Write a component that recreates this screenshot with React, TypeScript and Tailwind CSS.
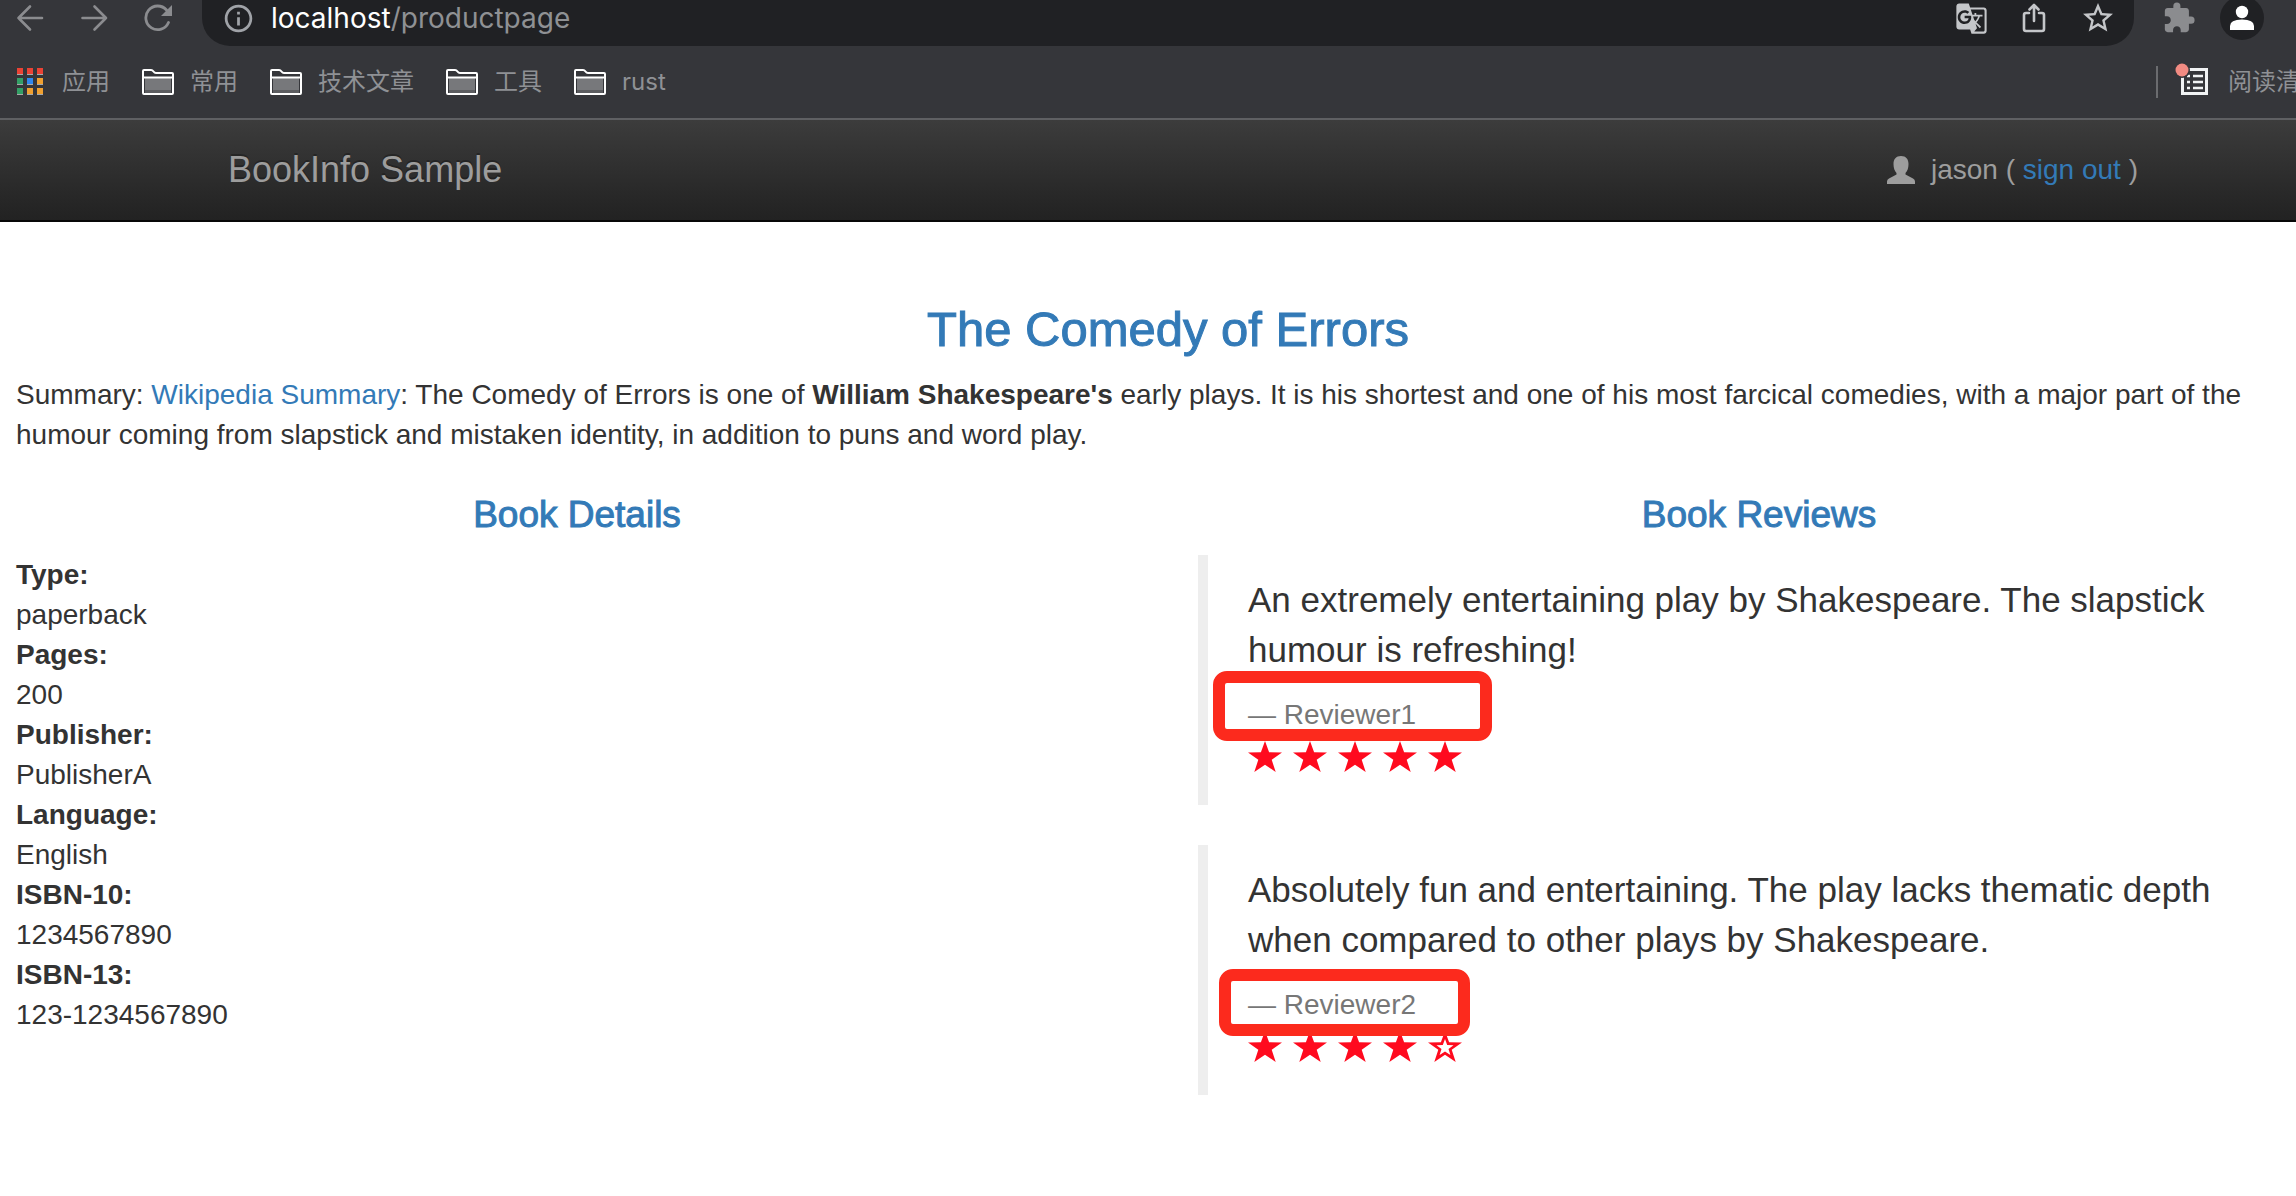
import React from "react";
import { MdExtension, MdGTranslate, MdInfoOutline, MdStarBorder } from "react-icons/md";

const appColors = ["#ea4335", "#ea4335", "#ea4335", "#34a066", "#2f87ee", "#f0a030", "#34a066", "#f0a030", "#f0a030"];

const folders = ["常用", "技术文章", "工具", "rust"];

const details = [
  ["Type:", "paperback"],
  ["Pages:", "200"],
  ["Publisher:", "PublisherA"],
  ["Language:", "English"],
  ["ISBN-10:", "1234567890"],
  ["ISBN-13:", "123-1234567890"],
];

const reviews = [
  {
    text: "An extremely entertaining play by Shakespeare. The slapstick humour is refreshing!",
    author: "Reviewer1",
    stars: 5,
    frame: "-top-6 -left-[35px] h-[70px] w-[279px]",
  },
  {
    text: "Absolutely fun and entertaining. The play lacks thematic depth when compared to other plays by Shakespeare.",
    author: "Reviewer2",
    stars: 4,
    frame: "-top-4 -left-[29px] h-[67px] w-[251px]",
  },
];

function IconButton({ label, children }: { label: string; children: React.ReactNode }) {
  return (
    <button type="button" aria-label={label} className="block shrink-0">
      {children}
    </button>
  );
}

function Toolbar() {
  return (
    <div className="flex h-[46px] items-start overflow-hidden pr-8 pl-4">
      <div className="flex h-9 items-center gap-9 text-[#8b8c8f]">
        <IconButton label="Back">
          <svg width="28" height="28" viewBox="0 0 28 28" fill="none" stroke="currentColor" strokeWidth="2.6" strokeLinecap="round" strokeLinejoin="round">
            <path d="M26 14H2.500M14 2.500L2.500 14 14 25.500" />
          </svg>
        </IconButton>
        <IconButton label="Forward">
          <svg width="28" height="28" viewBox="0 0 28 28" fill="none" stroke="currentColor" strokeWidth="2.6" strokeLinecap="round" strokeLinejoin="round">
            <path d="M2.500 14H26M14.500 2.500L26 14 14.500 25.500" />
          </svg>
        </IconButton>
        <IconButton label="Reload">
          <svg width="28" height="28" viewBox="0 0 28 28" fill="none" stroke="currentColor" strokeWidth="2.8" strokeLinecap="round">
            <path d="M24.500 18.500A11.800 11.800 0 1 1 22.500 6" />
            <path d="M28 1v11H17z" fill="currentColor" stroke="none" />
          </svg>
        </IconButton>
      </div>
      <div className="ml-[30px] flex h-[46px] flex-1 items-start rounded-b-[28px] bg-[#202124] pr-[18px] pl-5">
        <div className="flex h-9 flex-1 items-center gap-4">
          <MdInfoOutline size={33} color="#a0a3a8" />
          <a href="#" className="font-['Inter'] text-[28px] leading-9 text-[#8f9194]">
            <span className="text-white">localhost</span>/productpage
          </a>
        </div>
        <div className="flex h-9 items-center gap-8 text-[#c4c6c9]">
          <IconButton label="Translate">
            <MdGTranslate size={33} />
          </IconButton>
          <IconButton label="Share">
            <svg width="28" height="30" viewBox="0 0 28 30" fill="none" stroke="currentColor" strokeWidth="2.6" strokeLinecap="round" strokeLinejoin="round">
              <path d="M9 10H6q-2 0-2 2v14q0 2 2 2h16q2 0 2-2V12q0-2-2-2h-3M14 18V2M9.500 6.500L14 2l4.500 4.500" />
            </svg>
          </IconButton>
          <IconButton label="Bookmark this page">
            <MdStarBorder size={36} />
          </IconButton>
        </div>
      </div>
      <div className="ml-7 flex h-9 items-center gap-6">
        <span className="text-[#8b8c8f]">
          <IconButton label="Extensions">
            <MdExtension size={34} />
          </IconButton>
        </span>
        <IconButton label="Profile">
          <svg width="44" height="44" viewBox="0 0 44 44">
            <circle cx="22" cy="22" r="22" fill="#202124" />
            <circle cx="22" cy="16" r="6.200" fill="#fff" />
            <path d="M10 34v-4q0-6.500 12-6.500T34 30v4z" fill="#fff" />
          </svg>
        </IconButton>
      </div>
    </div>
  );
}

function Bookmarks() {
  return (
    <nav className="flex h-[72px] items-center gap-8 overflow-hidden pl-4 font-['Inter','Noto_Sans_CJK_SC',sans-serif] text-2xl whitespace-nowrap text-[#8f9195]">
      <a href="#" className="flex items-center gap-[18px]">
        <svg width="28" height="28" viewBox="0 0 28 28">
          {appColors.map((color, i) => (
            <g key={i}>
              <rect x={(i % 3) * 10 + 1} y={Math.floor(i / 3) * 10 + 1} width="6" height="6" fill="#a9a9a9" />
              <rect x={(i % 3) * 10 + 1} y={Math.floor(i / 3) * 10} width="6" height="6" fill={color} />
            </g>
          ))}
        </svg>
        应用
      </a>
      {folders.map((name) => (
        <a key={name} href="#" className="flex items-center gap-4">
          <svg width="32" height="26" viewBox="0 0 32 26">
            <path d="M3 9h26v13H3z" fill="#77787b" />
            <path d="M3 21h26v3H3z" fill="#5c5d60" />
            <path d="M1 24V2q0-1 1-1h7q1.500 0 2.500 1.500T14 4h16q1 0 1 1v19q0 1-1 1H2q-1 0-1-1zM1 8.500h30" fill="none" stroke="#fff" strokeWidth="2" />
          </svg>
          {name}
        </a>
      ))}
      <div className="ml-auto flex w-[140px] shrink-0 items-center">
        <span className="mr-[22px] h-8 w-[2px] shrink-0 bg-[#6b6c6f]" />
        <button type="button" className="flex items-center gap-[18px]">
          <svg width="30" height="30" viewBox="0 0 30 30" className="shrink-0 overflow-visible">
            <path d="M3 2.500h23.500v24H2.500V7" fill="none" stroke="#f1f3f4" strokeWidth="3" />
            <path d="M7 9h3M13 9h10M7 15h3M13 15h10M7 21h3M13 21h10" stroke="#f1f3f4" strokeWidth="2.600" />
            <circle cx="2" cy="3" r="8" fill="#35363a" />
            <circle cx="2" cy="3" r="6.500" fill="#f28b82" />
          </svg>
          阅读清
        </button>
      </div>
    </nav>
  );
}

function Star({ filled }: { filled: boolean }) {
  return (
    <svg width="34" height="31" viewBox="0 0 34 31">
      <path d="M17 0l4.100 11.200 12.900.2-10.300 7.400L27.700 31 17 23.700 6.300 31l4-12.200L0 11.400l12.900-.2z" fill="#ff0a1e" />
      {!filled && <path d="M17 8l2.200 6 6.300.2-5 3.800 1.900 6-5.400-3.600L11.600 24l1.900-6-5-3.800 6.300-.2z" fill="#fff" />}
    </svg>
  );
}

export default function App() {
  return (
    <div className="min-h-screen overflow-x-hidden bg-white font-['Liberation_Sans',sans-serif] text-[28px] leading-10 text-[#333]">
      <header className="border-b-2 border-[#5f6063] bg-[#35363a]">
        <Toolbar />
        <Bookmarks />
      </header>
      <div className="w-[calc(100%+40px)]">
        <nav className="border-b-2 border-[#080808] bg-linear-to-b from-[#3c3c3c] to-[#222]">
          <div className="mx-auto flex h-[100px] max-w-[1940px] items-center justify-between pl-[30px] text-[#9d9d9d]">
            <a href="#" className="text-4xl text-shadow-[0_-2px_0_rgb(0_0_0/0.25)]">
              BookInfo Sample
            </a>
            <p className="flex items-center gap-4">
              <svg width="28" height="28" viewBox="0 0 28 28" fill="currentColor">
                <path d="M14 0c5 0 7.500 3 7.500 8 0 4-1 7-3 9v1.500l7.500 4q2 1 2 3V28H0v-2.500q0-2 2-3l7.500-4V17c-2-2-3-5-3-9 0-5 2.500-8 7.500-8z" />
              </svg>
              <span>
                jason ( <a href="#" className="text-[#337ab7]">sign out</a> )
              </span>
            </p>
          </div>
        </nav>
        <main className="px-4 pt-[82px]">
          <h3 className="mb-5 text-center text-[49px] leading-[51px] text-[#337ab7] [-webkit-text-stroke:1px]">
            The Comedy of Errors
          </h3>
          <p className="mb-5">
            Summary: <a href="#" className="text-[#337ab7]">Wikipedia Summary</a>: The Comedy of Errors is one of <b>William Shakespeare's</b> early
            plays. It is his shortest and one of his most farcical comedies, with a major part of the humour coming from slapstick and mistaken
            identity, in addition to puns and word play.
          </p>
          <div className="grid grid-cols-2 gap-[60px]">
            <section>
              <h4 className="my-5 text-center text-[37px] leading-10 text-[#337ab7] [-webkit-text-stroke:1px]">Book Details</h4>
              <dl>
                {details.map(([term, value]) => (
                  <React.Fragment key={term}>
                    <dt className="font-bold">{term}</dt>
                    <dd>{value}</dd>
                  </React.Fragment>
                ))}
              </dl>
            </section>
            <section>
              <h4 className="my-5 text-center text-[37px] leading-10 text-[#337ab7] [-webkit-text-stroke:1px]">Book Reviews</h4>
              {reviews.map((review) => (
                <blockquote key={review.author} className="mb-10 border-l-[10px] border-[#eee] px-10 py-5">
                  <p className="mb-5 text-[35px] leading-[50px]">{review.text}</p>
                  <div className="relative z-10 text-[#777]">
                    — {review.author}
                    <div className={`absolute rounded-[14px] border-12 border-[#fc2a1d] ${review.frame}`} />
                  </div>
                  <div role="img" aria-label={`${review.stars} of 5 stars`} className="flex h-[50px] items-start gap-[11px] pt-1.5">
                    {[1, 2, 3, 4, 5].map((n) => (
                      <Star key={n} filled={n <= review.stars} />
                    ))}
                  </div>
                </blockquote>
              ))}
            </section>
          </div>
        </main>
      </div>
    </div>
  );
}
